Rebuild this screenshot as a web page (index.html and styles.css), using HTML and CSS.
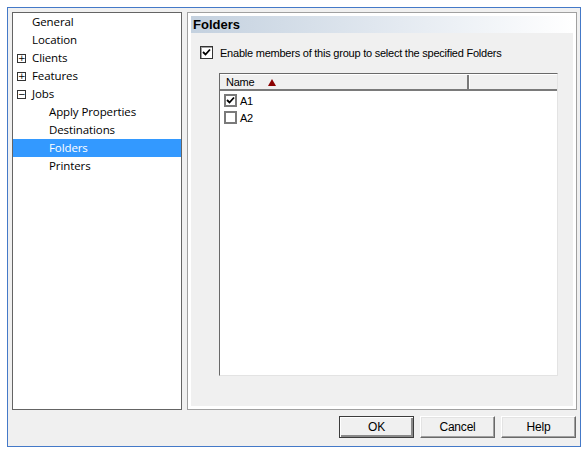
FILE: index.html
```html
<!DOCTYPE html>
<html lang="en">
<head>
    <meta charset="UTF-8">
    <title>Group Properties - Folders</title>
    <link rel="stylesheet" href="styles.css">
</head>
<body>
    <div class="window">
        <div class="main">
            <!-- Navigation tree -->
            <ul class="tree">
                <li class="node"><span class="label">General</span></li>
                <li class="node"><span class="label">Location</span></li>
                <li class="node"><span class="expander">+</span><span class="label">Clients</span></li>
                <li class="node"><span class="expander">+</span><span class="label">Features</span></li>
                <li class="node"><span class="expander minus">&minus;</span><span class="label">Jobs</span></li>
                <li class="node child"><span class="label">Apply Properties</span></li>
                <li class="node child"><span class="label">Destinations</span></li>
                <li class="node child selected"><span class="label">Folders</span></li>
                <li class="node child"><span class="label">Printers</span></li>
            </ul>

            <!-- Page -->
            <div class="page">
                <div class="page-title">Folders</div>
                <div class="page-body">
                    <label class="option">
                        <span class="check checked">
                            <svg width="9" height="9" viewBox="0 0 9 9"><polyline points="1,4 3.5,6.5 8,1.5" fill="none" stroke="#000" stroke-width="1.8"/></svg>
                        </span>
                        Enable members of this group to select the specified Folders
                    </label>

                    <div class="listview">
                        <div class="list-header">
                            <div class="col col-name">Name <span class="sort-arrow"></span></div>
                            <div class="col col-rest"></div>
                        </div>
                        <div class="list-rows">
                            <div class="row">
                                <span class="check list-check checked">
                                    <svg width="9" height="9" viewBox="0 0 9 9"><polyline points="1,4 3.5,6.5 8,1.5" fill="none" stroke="#000" stroke-width="1.8"/></svg>
                                </span>
                                A1
                            </div>
                            <div class="row">
                                <span class="check list-check"></span>
                                A2
                            </div>
                        </div>
                    </div>
                </div>
            </div>
        </div>

        <div class="buttons">
            <button class="btn default">OK</button>
            <button class="btn">Cancel</button>
            <button class="btn">Help</button>
        </div>
    </div>
</body>
</html>
```

FILE: styles.css
```css
* {
    margin: 0;
    padding: 0;
    box-sizing: border-box;
}

:root {
    --face: #f0f0f0;
    --frame: #4479c8;
    --dark: #696969;
    --shadow: #a0a0a0;
    --select: #3399ff;
}

body {
    background: #fff;
    font-family: 'Liberation Sans', Arial, sans-serif;
    font-size: 11px;
    letter-spacing: -0.23px;
    color: #000;
}

.window {
    margin: 7px 0 0 7px;
    width: 574px;
    height: 440px;
    border: 1px solid var(--frame);
    background: var(--face);
    padding: 4px 3px 0 4px;
}

.main {
    display: flex;
    gap: 5px;
    height: 398px;
}

/* Tree */
.tree {
    list-style: none;
    width: 170px;
    border: 1px solid #646464;
    background: #fff;
    font-family: 'Open Sans', 'Noto Sans', sans-serif;
    font-size: 11.5px;
    letter-spacing: -0.1px;
}

.node {
    position: relative;
    height: 18px;
    line-height: 18px;
    padding-left: 19px;
    color: #000;
}

.node.child {
    padding-left: 36px;
}

.node.selected {
    background: var(--select);
    color: #fff;
}

.expander {
    position: absolute;
    left: 4px;
    top: 5px;
    width: 9px;
    height: 9px;
    border: 1px solid #333;
    font-family: 'DejaVu Sans', sans-serif;
    font-size: 9px;
    line-height: 7px;
    letter-spacing: 0;
    text-align: center;
    color: #000;
}

/* Right page */
.page {
    width: 390px;
    border: 1px solid var(--shadow);
    background: #fff;
    padding: 3px;
    display: flex;
    flex-direction: column;
}

.page-title {
    height: 17px;
    line-height: 17px;
    padding-left: 2px;
    font-size: 13px;
    font-weight: bold;
    letter-spacing: 0;
    color: #000;
    background: linear-gradient(to right, #c4d1df 0%, #e4eaf1 55%, #ffffff 100%);
}

.page-body {
    flex: 1;
    background: var(--face);
    padding: 13px 15px 30px 9px;
    display: flex;
    flex-direction: column;
}

.option {
    display: flex;
    align-items: center;
    gap: 7px;
    height: 13px;
    margin-bottom: 14px;
}

.check {
    display: inline-flex;
    align-items: center;
    justify-content: center;
    width: 13px;
    height: 13px;
    border: 1px solid #333;
    background: #fff;
    box-shadow: inset 1px 1px #a0a0a0;
}

/* List view */
.listview {
    flex: 1;
    margin-left: 19px;
    border: 1px solid;
    border-color: var(--dark) #e3e3e3 #e3e3e3 var(--dark);
    background: #fff;
    display: flex;
    flex-direction: column;
}

.list-header {
    display: flex;
    height: 17px;
    background: var(--face);
    border-top: 1px solid #fff;
    border-bottom: 2px solid #7a7a7a;
}

.col {
    line-height: 14px;
    padding-left: 6px;
}

.col-name {
    width: 249px;
    border-right: 2px solid #7a7a7a;
    display: flex;
    align-items: center;
}

.col-rest {
    flex: 1;
    border-left: 1px solid #fff;
}

.sort-arrow {
    margin-left: 14px;
    width: 0;
    height: 0;
    border-left: 4.5px solid transparent;
    border-right: 4.5px solid transparent;
    border-bottom: 7px solid #8b0000;
}

.list-rows {
    padding: 1px 0 0 4px;
}

.row {
    display: flex;
    align-items: center;
    gap: 3px;
    height: 17px;
}

.list-check {
    border: 2px solid #7a7a7a;
    box-shadow: none;
}

/* Buttons */
.buttons {
    display: flex;
    justify-content: flex-end;
    gap: 6px;
    margin-top: 6px;
    padding-right: 1px;
}

.btn {
    width: 75px;
    height: 22px;
    font-family: 'Liberation Sans', Arial, sans-serif;
    font-size: 12px;
    letter-spacing: -0.2px;
    color: #000;
    background: var(--face);
    border: 1px solid;
    border-color: #fff #696969 #696969 #fff;
    box-shadow: inset -1px -1px #a0a0a0, inset 1px 1px #e3e3e3;
}

.btn.default {
    border: 1px solid #3c3c3c;
    box-shadow: inset 1px 1px #fff, inset -2px -2px #8a8a8a;
}
```
